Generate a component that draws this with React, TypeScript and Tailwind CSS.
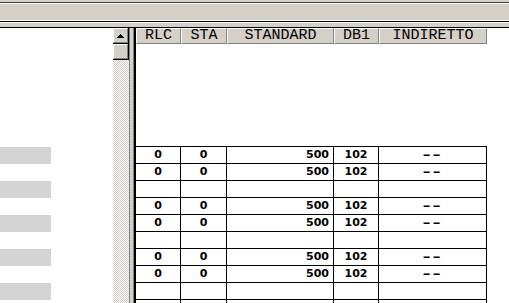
const cols = [
  { id: 'rlc', label: 'RLC', w: 'w-[45px]', align: 'text-center' },
  { id: 'sta', label: 'STA', w: 'w-[46px]', align: 'text-center' },
  { id: 'std', label: 'STANDARD', w: 'w-[107px]', align: 'text-right pr-[4px]' },
  { id: 'db1', label: 'DB1', w: 'w-[45px]', align: 'text-center' },
  { id: 'ind', label: 'INDIRETTO', w: 'w-[108px]', align: 'text-center' },
];

type Row = string[] | null;

const filled = ['0', '0', '500', '102', '--'];
const rows: Row[] = [filled, filled, null, filled, filled, null, filled, filled, null, null];

function UpArrow() {
  return (
    <svg width="7" height="4" viewBox="0 0 7 4" className="block">
      <path d="M3 0h1v1h1v1h1v1h1v1H0V3h1V2h1V1h1z" fill="#000" />
    </svg>
  );
}

function RaisedBox({ children, className = '' }: { children?: React.ReactNode; className?: string }) {
  return (
    <div className={`shrink-0 border-b border-r border-black ${className}`}>
      <div className="flex h-full w-full items-center justify-center border border-b-[#808080] border-r-[#808080] border-l-white border-t-white bg-[#d4d0c8]">
        {children}
      </div>
    </div>
  );
}

export default function App() {
  return (
    <div className="flex h-[303px] w-[509px] flex-col overflow-hidden bg-white font-[family-name:'DejaVu_Sans',Verdana,sans-serif]">
      {/* menu / toolbar band */}
      <div className="h-[2px] shrink-0 bg-[#d4d0c8]" />
      <div className="h-px shrink-0 bg-[#404040]" />
      <div className="h-px shrink-0 bg-white" />
      <div className="h-[16px] shrink-0 bg-[#d4d0c8]" />
      <div className="h-px shrink-0 bg-white" />
      <div className="h-px shrink-0 bg-black" />
      <div className="h-px shrink-0 bg-white" />
      <div className="h-[4px] shrink-0 bg-[#d4d0c8]" />

      <div className="flex min-h-0 flex-1 overflow-hidden border-t border-black">
        {/* left pane */}
        <div className="flex w-[129px] shrink-0">
          <div className="flex w-[113px] flex-col gap-[17px] bg-white pt-[119px]">
            {[0, 1, 2, 3, 4].map((i) => (
              <div key={i} className="h-[17px] w-[51px] shrink-0 bg-[#d4d4d4]" />
            ))}
          </div>
          <div className="flex w-[16px] flex-col">
            <RaisedBox className="h-[16px]">
              <UpArrow />
            </RaisedBox>
            <RaisedBox className="h-[16px]" />
            <div className="flex-1 bg-[repeating-conic-gradient(#d4d0c8_0_25%,#ffffff_0_50%)] bg-[length:2px_2px]" />
          </div>
        </div>

        {/* splitter */}
        <div className="w-px shrink-0 bg-[#808080]" />
        <div className="w-[3px] shrink-0 bg-[#d4d0c8]" />
        <div className="w-px shrink-0 bg-[#808080]" />
        <div className="w-[2px] shrink-0 bg-black" />

        {/* right pane */}
        <div className="flex flex-1 flex-col bg-white">
          <div className="flex h-[16px] shrink-0 font-[family-name:'Liberation_Mono','Courier_New',monospace] text-[15px] leading-[14px] font-normal text-black">
            {cols.map((c) => (
              <div
                key={c.id}
                className={`${c.w} flex shrink-0 items-center justify-center border border-b-[#808080] border-r-[#808080] border-l-white border-t-white bg-[#d4d0c8]`}
              >
                {c.label}
              </div>
            ))}
          </div>

          <div className="mt-[102px] flex w-[351px] shrink-0 flex-col border-t border-black text-[11px] font-bold leading-[16px] text-black">
            {rows.map((r, i) => (
              <div key={i} className="flex h-[17px] shrink-0 border-b border-black">
                {cols.map((c, j) => (
                  <div key={c.id} className={`${c.w} shrink-0 border-r border-black ${c.align}`}>
                    {r && j === 4 ? (
                      <span className="inline-block scale-x-[1.8] tracking-[1px]">{r[j]}</span>
                    ) : r ? (
                      r[j]
                    ) : (
                      ''
                    )}
                  </div>
                ))}
              </div>
            ))}
          </div>
        </div>
      </div>
    </div>
  );
}
